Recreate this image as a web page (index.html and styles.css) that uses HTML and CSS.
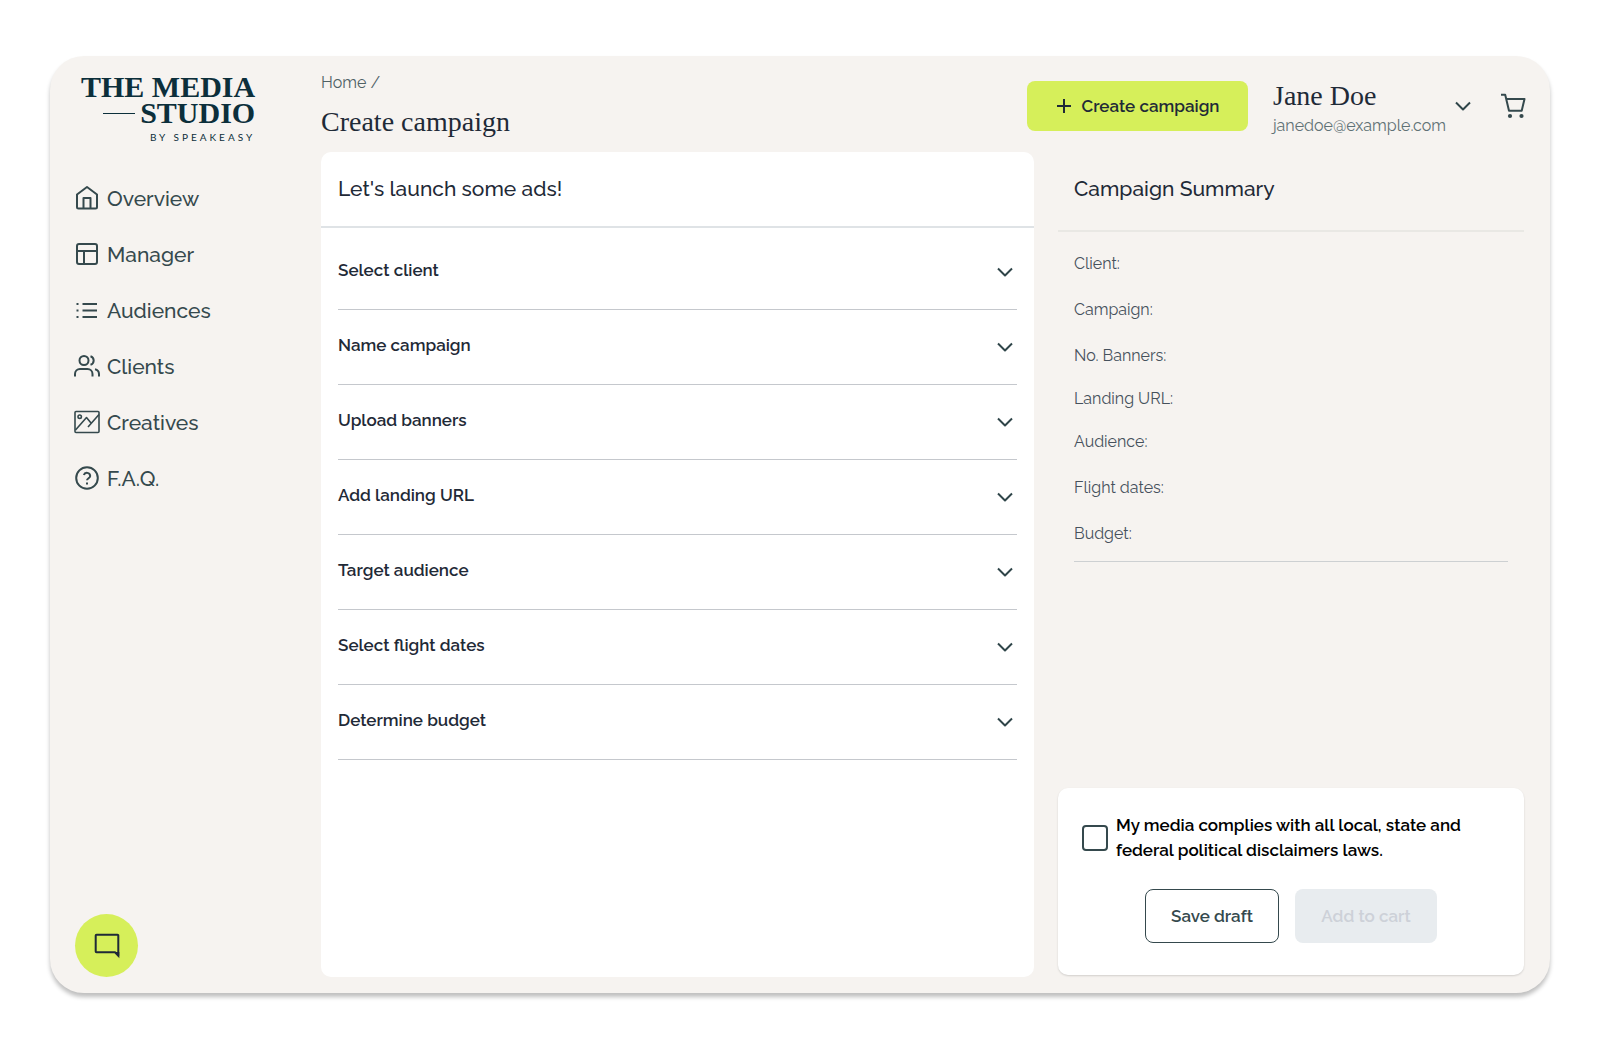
FILE: index.html
```html
<!DOCTYPE html>
<html lang="en">
<head>
    <meta charset="utf-8">
    <meta name="viewport" content="width=device-width, initial-scale=1.0">
    <title>Create campaign - The Media Studio</title>
    <link rel="stylesheet" href="styles.css">
</head>
<body>
    <div class="app">
        <aside class="sidebar">
            <a href="#" class="logo">
                <span class="logo-line">THE MEDIA</span>
                <span class="logo-line logo-studio">STUDIO</span>
                <span class="logo-by">BY SPEAKEASY</span>
            </a>
            <nav class="nav">
                <a href="#" class="nav-link">
                    <svg class="icon" viewBox="0 0 26 26"><path d="M3 9.500 13 2l10 7.500V22a1.500 1.500 0 0 1-1.500 1.500h-17A1.500 1.500 0 0 1 3 22zM9.500 23.500V13h7v10.500"/></svg>
                    Overview
                </a>
                <a href="#" class="nav-link">
                    <svg class="icon" viewBox="0 0 26 26"><rect x="3" y="3" width="20" height="20" rx="2"/><path d="M3 10h20M10 10v13"/></svg>
                    Manager
                </a>
                <a href="#" class="nav-link">
                    <svg class="icon" viewBox="0 0 26 26"><path d="M8.500 7H23M8.500 13.500H23M8.500 20H23M2.500 7h2M2.500 13.500h2M2.500 20h2"/></svg>
                    Audiences
                </a>
                <a href="#" class="nav-link">
                    <svg class="icon" viewBox="0 0 26 26"><circle cx="10" cy="7.500" r="4.500"/><path d="M1 23.500v-2.500a5 5 0 0 1 5-5h7.500a5 5 0 0 1 5 5v2.500M16.500 3.200a4.500 4.500 0 0 1 0 8.600M21 16.300a5 5 0 0 1 4 4.700v2.500"/></svg>
                    Clients
                </a>
                <a href="#" class="nav-link">
                    <svg class="icon icon-thin" viewBox="0 0 26 26"><rect x="1" y="2.500" width="24" height="21" rx="1"/><circle cx="5.700" cy="7.700" r="1.700"/><path d="M1.500 21 12.500 8.500l4.500 5.500M25 5.500 14 18"/></svg>
                    Creatives
                </a>
                <a href="#" class="nav-link">
                    <svg class="icon" viewBox="0 0 26 26"><circle cx="13" cy="13" r="10.800"/><path d="M9.800 10a3.300 3.300 0 0 1 6.400 1c0 2.200-3.200 2.300-3.200 4.300M13 17.500v2"/></svg>
                    F.A.Q.
                </a>
            </nav>
            <button type="button" class="chat" aria-label="Open chat">
                <svg class="icon" viewBox="0 0 26 26"><path d="M2.500 1.800h21a.8.8 0 0 1 .8.800v20l-3.300-3.300H2.500a.8.8 0 0 1-.8-.8V2.600a.8.8 0 0 1 .8-.8z"/><path d="M20 19h5.300v6.300z" fill="currentColor" stroke="none"/></svg>
            </button>
        </aside>

        <div class="page">
            <header class="header">
                <div class="heading">
                    <div class="breadcrumb"><a href="#">Home</a> /</div>
                    <h1>Create campaign</h1>
                </div>
                <button type="button" class="btn btn-create">
                    <svg class="icon icon-plus" viewBox="0 0 16 16"><path d="M8 1v14M1 8h14"/></svg>
                    Create campaign
                </button>
                <button type="button" class="user">
                    <span class="user-text">
                        <span class="user-name">Jane Doe</span>
                        <span class="user-email">janedoe@example.com</span>
                    </span>
                    <svg class="icon chevron" viewBox="0 0 16 16"><path d="M1 4.500 8 11.500 15 4.500"/></svg>
                </button>
                <a href="#" class="cart" aria-label="Cart">
                    <svg class="icon" viewBox="0 0 26 26"><path d="M1 1.800h4.200L9 17.800h12.700L24.500 6H6.200"/><circle cx="10" cy="23" r="2.100" fill="currentColor" stroke="none"/><circle cx="21.500" cy="23" r="2.100" fill="currentColor" stroke="none"/></svg>
                </a>
            </header>

            <div class="columns">
                <main class="panel">
                    <h2 class="panel-title">Let's launch some ads!</h2>
                    <div class="steps">
                        <button type="button" class="step">Select client <svg class="icon chevron" viewBox="0 0 16 16"><path d="M1 4.500 8 11.500 15 4.500"/></svg></button>
                        <button type="button" class="step">Name campaign <svg class="icon chevron" viewBox="0 0 16 16"><path d="M1 4.500 8 11.500 15 4.500"/></svg></button>
                        <button type="button" class="step">Upload banners <svg class="icon chevron" viewBox="0 0 16 16"><path d="M1 4.500 8 11.500 15 4.500"/></svg></button>
                        <button type="button" class="step">Add landing URL <svg class="icon chevron" viewBox="0 0 16 16"><path d="M1 4.500 8 11.500 15 4.500"/></svg></button>
                        <button type="button" class="step">Target audience <svg class="icon chevron" viewBox="0 0 16 16"><path d="M1 4.500 8 11.500 15 4.500"/></svg></button>
                        <button type="button" class="step">Select flight dates <svg class="icon chevron" viewBox="0 0 16 16"><path d="M1 4.500 8 11.500 15 4.500"/></svg></button>
                        <button type="button" class="step">Determine budget <svg class="icon chevron" viewBox="0 0 16 16"><path d="M1 4.500 8 11.500 15 4.500"/></svg></button>
                    </div>
                </main>

                <section class="summary">
                    <h2 class="summary-title">Campaign Summary</h2>
                    <ul class="summary-list">
                        <li>Client:</li>
                        <li>Campaign:</li>
                        <li>No. Banners:</li>
                        <li class="compact">Landing URL:</li>
                        <li>Audience:</li>
                        <li>Flight dates:</li>
                        <li>Budget:</li>
                    </ul>
                    <form class="checkout" action="javascript:void(0);">
                        <div class="agree">
                            <input type="checkbox" id="complies">
                            <label for="complies">My media complies with all local, state and federal political disclaimers laws.</label>
                        </div>
                        <div class="actions">
                            <button type="button" class="btn btn-outline">Save draft</button>
                            <button type="submit" class="btn btn-disabled" disabled>Add to cart</button>
                        </div>
                    </form>
                </section>
            </div>
        </div>
    </div>
</body>
</html>
```

FILE: styles.css
```css
* {
    box-sizing: border-box;
}

body {
    display: flex;
    min-height: 100vh;
    margin: 0;
    padding: 56px 50px;
    background: #fff;
    color: #1f2a37;
    font-family: Raleway, Lato, sans-serif;
    font-size: 17px;
}

h1,
h2,
ul {
    margin: 0;
    padding: 0;
    font-weight: 400;
}

h2 {
    font-size: 21px;
    font-weight: 500;
    line-height: 74px;
}

a {
    color: inherit;
    text-decoration: none;
}

button {
    padding: 0;
    border: none;
    background: none;
    color: inherit;
    font: inherit;
    cursor: pointer;
}

.icon {
    flex: none;
    width: 26px;
    height: 26px;
    fill: none;
    stroke: currentColor;
    stroke-width: 2;
    stroke-linejoin: round;
}

.icon-thin {
    stroke-width: 1.6;
}

.chevron {
    width: 16px;
    height: 16px;
    color: #2f4549;
}

.app {
    display: flex;
    flex: 1;
    background: #f6f3f0;
    border-radius: 34px;
    box-shadow: 0 4px 4px rgba(0, 0, 0, 0.25);
}

/* sidebar */
.sidebar {
    display: flex;
    flex-direction: column;
    align-items: flex-start;
    flex: none;
    width: 271px;
    padding: 18px 24px 16px;
}

.logo {
    display: flex;
    flex-direction: column;
    align-items: flex-end;
    margin-left: 7px;
    color: #0c2f3b;
    font-family: "Liberation Serif", serif;
    font-size: 30px;
    font-weight: 700;
    line-height: 26px;
}

.logo-studio {
    display: flex;
    align-items: center;
    gap: 5px;
}

.logo-studio::before {
    content: "";
    width: 32px;
    height: 1px;
    background: #0c2f3b;
}

.logo-by {
    font-family: Lato, sans-serif;
    font-size: 10px;
    font-weight: 400;
    letter-spacing: 3px;
    line-height: 22px;
}

.nav {
    display: flex;
    flex-direction: column;
    margin-top: 22px;
    color: #35494d;
    font-size: 21px;
    font-weight: 500;
}

.nav-link {
    display: flex;
    align-items: center;
    gap: 7px;
    height: 56px;
}

.chat {
    display: flex;
    align-items: center;
    justify-content: center;
    width: 63px;
    height: 63px;
    margin-top: auto;
    margin-left: 1px;
    border-radius: 50%;
    background: #d6ef5a;
}

/* header */
.page {
    display: flex;
    flex-direction: column;
    flex: 1;
    padding: 0 26px 16px 0;
}

.header {
    display: flex;
    align-items: center;
    height: 96px;
    padding-top: 4px;
}

.heading {
    flex: 1;
}

.breadcrumb {
    color: #4f6165;
    font-size: 16px;
    line-height: 20px;
}

h1 {
    margin-top: 11px;
    font-family: "Liberation Serif", serif;
    font-size: 28px;
    line-height: 36px;
}

.btn {
    display: flex;
    align-items: center;
    justify-content: center;
    border-radius: 8px;
    font-weight: 600;
}

.btn-create {
    gap: 10px;
    width: 221px;
    height: 50px;
    background: #d6ef5a;
}

.icon-plus {
    width: 16px;
    height: 16px;
}

.user {
    display: flex;
    align-items: center;
    gap: 10px;
    margin-left: 25px;
    text-align: left;
}

.user-text {
    display: flex;
    flex-direction: column;
    width: 172px;
    padding-top: 5px;
}

.user-name {
    font-family: "Liberation Serif", serif;
    font-size: 28px;
    line-height: 34px;
}

.user-email {
    color: #5f7175;
    font-size: 16px;
    line-height: 26px;
}

.cart {
    display: flex;
    margin-right: -2px;
    margin-left: 29px;
    color: #35494d;
}

/* columns */
.columns {
    display: flex;
    flex: 1;
    gap: 24px;
}

.panel {
    flex: 1;
    background: #fff;
    border-radius: 10px;
}

.panel-title {
    padding: 0 17px;
    border-bottom: 2px solid #dfe3e6;
}

.steps {
    padding: 7px 17px;
}

.step {
    display: flex;
    align-items: center;
    justify-content: space-between;
    width: 100%;
    height: 75px;
    padding: 0 4px 4px 0;
    border-bottom: 1px solid #c5c8cd;
    font-weight: 600;
}

.step .chevron {
    margin-top: 4px;
}

.summary {
    display: flex;
    flex-direction: column;
    width: 466px;
}

.summary-title {
    padding: 0 16px 4px;
    border-bottom: 2px solid #e9e8e4;
}

.summary-list {
    margin: 9px 16px 0;
    padding-bottom: 4px;
    border-bottom: 1px solid #cdd0d2;
    color: #46515c;
    font-size: 16px;
    line-height: 46px;
    list-style: none;
}

.compact {
    line-height: 40px;
}

.checkout {
    margin-top: auto;
    margin-bottom: 2px;
    padding: 25px 24px 32px;
    background: #fff;
    border-radius: 10px;
    box-shadow: 0 1px 2px rgba(0, 0, 0, 0.15);
}

.agree {
    display: flex;
    align-items: center;
    gap: 8px;
    color: #000;
    font-weight: 600;
    line-height: 25px;
}

.agree input {
    flex: none;
    appearance: none;
    width: 26px;
    height: 26px;
    margin: 0;
    border: 2px solid #35494d;
    border-radius: 4px;
}

.agree label {
    max-width: 368px;
}

.actions {
    display: flex;
    justify-content: center;
    gap: 16px;
    margin-top: 26px;
}

.actions .btn {
    height: 54px;
}

.btn-outline {
    width: 134px;
    border: 1px solid #35494d;
    color: #35494d;
}

.btn-disabled {
    width: 142px;
    background: #e8ecef;
    color: #cdd1d8;
}
```
